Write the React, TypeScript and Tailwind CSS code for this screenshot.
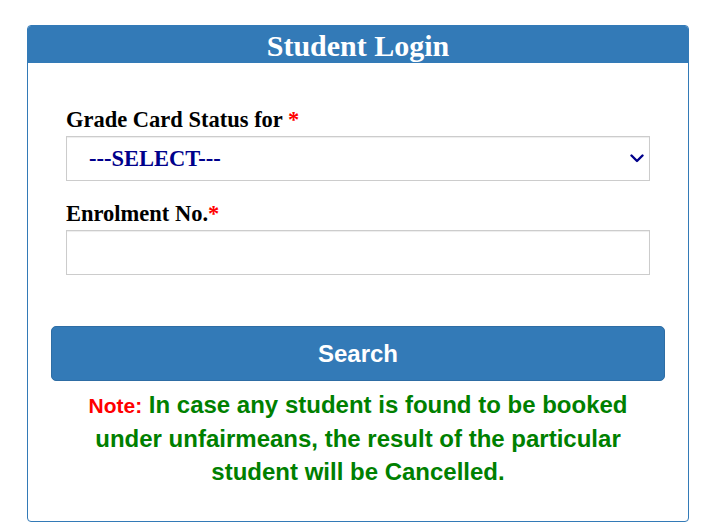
import { useState } from "react";

// Small chevron for the select box
const ChevronDown = () => (
  <svg width="14" height="9" viewBox="0 0 14 9" fill="none" stroke="currentColor" strokeWidth="2.4" strokeLinecap="round" strokeLinejoin="round">
    <path d="M1.5 1.5L7 7l5.5-5.5" />
  </svg>
);

const App = () => {
  const [gradeFor, setGradeFor] = useState("");
  const [enrolment, setEnrolment] = useState("");

  return (
    <div className="min-h-screen bg-white pl-[27px] pt-[25px]">
      <div className="w-[662px] rounded-[4px] border border-[#337ab7] overflow-hidden">
        {/* Header */}
        <div className="bg-[#337ab7] h-[37px] text-center">
          <h3 className="text-white font-bold text-[30px] leading-[40px] font-['Liberation_Serif',serif]">
            Student Login
          </h3>
        </div>

        <div className="px-[38px] pt-[44px] font-['Liberation_Serif',serif]">
          <label className="block text-[22.5px] leading-[25px] font-bold text-black mb-[4px]">
            Grade Card Status for <span className="text-[#ff0000]">*</span>
          </label>
          <div className="relative">
            <select
              value={gradeFor}
              onChange={(e) => setGradeFor(e.target.value)}
              className="appearance-none w-full h-[45px] border border-[#ccc] bg-white pl-[22px] text-[22.5px] font-bold text-[#00008b] outline-none shadow-[inset_0_1px_1px_rgba(0,0,0,0.075)] font-['Liberation_Serif',serif]"
            >
              <option value="">---SELECT---</option>
              <option value="june">June TEE</option>
              <option value="dec">December TEE</option>
            </select>
            <span className="absolute right-[6px] top-[18px] text-[#00008b] pointer-events-none">
              <ChevronDown />
            </span>
          </div>

          <label className="block mt-[20px] text-[22.5px] leading-[25px] font-bold text-black mb-[4px]">
            Enrolment No.<span className="text-[#ff0000]">*</span>
          </label>
          <input
            type="text"
            value={enrolment}
            onChange={(e) => setEnrolment(e.target.value)}
            className="block w-full h-[45px] border border-[#ccc] bg-white px-3 text-[18px] outline-none shadow-[inset_0_1px_1px_rgba(0,0,0,0.075)]"
          />
        </div>

        <div className="px-[23px] pt-[51px] pb-[33px] font-['Liberation_Sans',Arial,sans-serif]">
          <button
            type="button"
            className="w-full h-[55px] rounded-[5px] bg-[#337ab7] border border-[#2e6da4] text-white text-[24px] font-bold"
          >
            Search
          </button>

          <p className="mt-[7px] text-center font-bold text-[24px] leading-[33px] text-[#008000]">
            <span className="text-[#ff0000] text-[21px]">Note:</span> In case any student is found to be booked
            <br />
            under unfairmeans, the result of the particular
            <br />
            student will be Cancelled.
          </p>
        </div>
      </div>
    </div>
  );
};

export default App;
